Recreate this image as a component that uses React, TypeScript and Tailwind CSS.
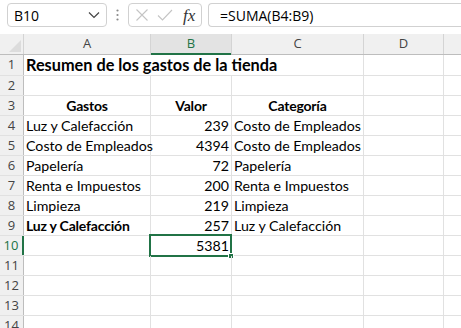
import React from "react";

const cellFont = { fontFamily: "Lato, 'Open Sans', sans-serif" };

type Cell = { t?: string; bold?: boolean; align?: "left" | "right" | "center" };

const rows: Cell[][] = [
  [],
  [],
  [
    { t: "Gastos", bold: true, align: "center" },
    { t: "Valor", bold: true, align: "center" },
    { t: "Categoría", bold: true, align: "center" },
  ],
  [{ t: "Luz y Calefacción" }, { t: "239", align: "right" }, { t: "Costo de Empleados" }],
  [{ t: "Costo de Empleados" }, { t: "4394", align: "right" }, { t: "Costo de Empleados" }],
  [{ t: "Papelería" }, { t: "72", align: "right" }, { t: "Papelería" }],
  [{ t: "Renta e Impuestos" }, { t: "200", align: "right" }, { t: "Renta e Impuestos" }],
  [{ t: "Limpieza" }, { t: "219", align: "right" }, { t: "Limpieza" }],
  [{ t: "Luz y Calefacción", bold: true }, { t: "257", align: "right" }, { t: "Luz y Calefacción" }],
  [{}, { t: "5381", align: "right" }, {}],
  [],
  [],
  [],
  [],
];

const widths = ["w-[127px]", "w-[81px]", "w-[132px]", "w-[80px]"];

function DataCell({ c, w, sel }: { c?: Cell; w: string; sel?: boolean }) {
  const al = c?.align === "right" ? "justify-end pr-[2px]" : c?.align === "center" ? "justify-center" : "justify-start pl-[2px]";
  return (
    <div className={`${w} shrink-0 h-full border-r border-[#e1e1e1] flex items-center relative ${al}`}>
      {c?.t && (
        <span
          className={`whitespace-nowrap text-black ${c.bold ? "font-bold text-[14px] tracking-[-0.2px]" : "text-[14.2px]"}`}
          style={cellFont}
        >
          {c.t}
        </span>
      )}
      {sel && (
        <div className="absolute left-[-2px] top-[-2px] right-[-1px] bottom-[-2px] border-2 border-[#217346] pointer-events-none">
          <div className="absolute right-[-4px] bottom-[-4px] w-[6px] h-[6px] bg-[#217346] border border-white" />
        </div>
      )}
    </div>
  );
}

function RowHeader({ n, active }: { n: number; active?: boolean }) {
  return (
    <div
      className={`w-[24px] shrink-0 h-full flex items-center justify-center bg-[#f0f0f0] border-r ${
        active ? "border-r-2 border-[#217346] text-[#217346]" : "border-[#bdbdbd] text-[#444]"
      } text-[13px]`}
      style={{ fontFamily: "'Open Sans', 'Noto Sans', sans-serif" }}
    >
      {n}
    </div>
  );
}

export default function App() {
  return (
    <div className="w-[461px] h-[328px] bg-white overflow-hidden relative">
      {/* Toolbar */}
      <div className="h-[34px] flex items-start pt-[3px] pl-[7px] gap-0">
        <div className="w-[100px] h-[24px] border border-[#d1d1d1] rounded-[4px] flex items-center justify-between pl-[6px] pr-[6px]">
          <span className="text-[14px] text-black" style={{ fontFamily: "'Open Sans', 'Noto Sans', sans-serif" }}>
            B10
          </span>
          <svg width="12" height="8" viewBox="0 0 12 8" fill="none">
            <path d="M1 1.5 L6 6.5 L11 1.5" stroke="#444" strokeWidth="1.2" />
          </svg>
        </div>
        <div className="w-[21px] h-[24px] flex items-center justify-center">
          <svg width="3" height="12" viewBox="0 0 3 12">
            <circle cx="1.5" cy="1.5" r="1.1" fill="#8a8a8a" />
            <circle cx="1.5" cy="6" r="1.1" fill="#8a8a8a" />
            <circle cx="1.5" cy="10.5" r="1.1" fill="#8a8a8a" />
          </svg>
        </div>
        <div className="w-[74px] h-[24px] border border-[#d1d1d1] rounded-[4px] flex items-center pl-[6px] pr-[4px] gap-[8px]">
          <svg width="14" height="14" viewBox="0 0 14 14" fill="none">
            <path d="M1.5 1.5 L12.5 12.5 M12.5 1.5 L1.5 12.5" stroke="#c4c4c4" strokeWidth="1.1" />
          </svg>
          <svg width="16" height="14" viewBox="0 0 16 14" fill="none">
            <path d="M1 7.5 L5.5 12 L15 2" stroke="#c4c4c4" strokeWidth="1.1" />
          </svg>
          <span
            className="text-[17px] italic text-[#333] leading-none ml-[2px]"
            style={{ fontFamily: "'Liberation Serif', 'DejaVu Serif', serif" }}
          >
            fx
          </span>
        </div>
        <div className="ml-[6px] flex-1 h-[24px] border border-r-0 border-[#d1d1d1] rounded-l-[4px] flex items-center pl-[11px]">
          <span className="text-[14px] text-black" style={{ fontFamily: "'Open Sans', 'Noto Sans', sans-serif" }}>
            =SUMA(B4:B9)
          </span>
        </div>
      </div>

      {/* Column headers */}
      <div
        className="h-[21px] flex bg-[#f0f0f0] border-b border-[#bdbdbd] text-[13px] text-[#444]"
        style={{ fontFamily: "'Open Sans', 'Noto Sans', sans-serif" }}
      >
        <div className="w-[24px] shrink-0 h-full border-r border-[#d4d4d4] relative">
          <svg className="absolute right-[2px] bottom-[2px]" width="12" height="12" viewBox="0 0 12 12">
            <path d="M12 0 L12 12 L0 12 Z" fill="#dcdcdc" />
          </svg>
        </div>
        <div className="w-[127px] shrink-0 flex items-center justify-center border-r border-[#d4d4d4]">A</div>
        <div className="w-[81px] shrink-0 flex items-center justify-center border-r border-[#d4d4d4] bg-[#e3e3e3] text-[#217346] relative">
          B
          <div className="absolute left-0 right-0 bottom-[-1px] h-[2px] bg-[#217346]" />
        </div>
        <div className="w-[132px] shrink-0 flex items-center justify-center border-r border-[#d4d4d4]">C</div>
        <div className="w-[80px] shrink-0 flex items-center justify-center border-r border-[#d4d4d4]">D</div>
        <div className="flex-1" />
      </div>

      {/* Rows */}
      {rows.map((r, i) => {
        const n = i + 1;
        const h = i === 0 ? "h-[21px]" : "h-[20px]";
        if (n === 1) {
          return (
            <div key={n} className={`${h} flex border-b border-[#e1e1e1]`}>
              <RowHeader n={n} />
              <div className="w-[340px] shrink-0 h-full border-r border-[#e1e1e1] flex items-center pl-[2px]">
                <span className="whitespace-nowrap text-[16.3px] font-bold text-black" style={cellFont}>
                  Resumen de los gastos de la tienda
                </span>
              </div>
              <div className="w-[80px] shrink-0 h-full border-r border-[#e1e1e1]" />
              <div className="flex-1" />
            </div>
          );
        }
        return (
          <div key={n} className={`${h} flex border-b border-[#e1e1e1]`}>
            <RowHeader n={n} active={n === 10} />
            {widths.map((w, j) => (
              <DataCell key={j} c={r[j]} w={w} sel={n === 10 && j === 1} />
            ))}
            <div className="flex-1" />
          </div>
        );
      })}
    </div>
  );
}
